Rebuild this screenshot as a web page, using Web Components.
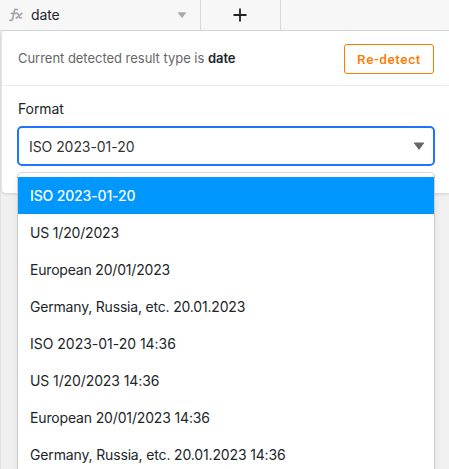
<!DOCTYPE html>
<html lang="en">
<head>
<meta charset="utf-8">
<title>Formula column format</title>
<style>
html, body { margin: 0; height: 469px; overflow: hidden; }
body { font: 14px/20px Inter, "Liberation Sans", sans-serif; color: #212529; }
</style>
</head>
<body>
<formula-view></formula-view>
<script>
function define(name, html) {
  const template = document.createElement('template');
  template.innerHTML = html;
  customElements.define(name, class extends HTMLElement {
    constructor() {
      super();
      this.attachShadow({ mode: 'open' }).append(template.content.cloneNode(true));
    }
  });
}

define('column-header', `
<style>
:host { display: flex; height: 30px; background: #f7f7f7; border-bottom: 1px solid #d5d8dc; }
.column { box-sizing: border-box; width: 201px; display: flex; align-items: center; padding: 0 13px 0 9px; border-right: 1px solid #d5d8dc; }
.name { flex: 1; margin-left: 8px; letter-spacing: -.15px; }
.add { box-sizing: border-box; width: 80px; display: grid; place-items: center; border-right: 1px solid #d5d8dc; }
.add svg { position: relative; left: -.5px; top: -.5px; }
svg { display: block; }
</style>
<div class="column">
  <svg width="14" height="14" viewBox="0 0 14 14" fill="none" stroke="#a6a6a6" stroke-width="1.7" stroke-linecap="round" stroke-linejoin="round"><path d="M8.2 1.7C6.9.8 5.8 1.3 5.4 3L3.7 10.5C3.4 12.1 2.5 12.8 1 12.2M2.5 5.3H7M7.5 5.3c1-.3 1.4.2 1.8 1.2l.9 2.2c.4 1.1.9 1.4 1.9 1M12.9 5.3 7.3 10.1"/></svg>
  <span class="name">date</span>
  <svg width="10" height="7" viewBox="0 0 10 7"><path d="M1.3.8H8.7L5 5.5Z" fill="#aaa" stroke="#aaa" stroke-linejoin="round"/></svg>
</div>
<div class="add"><svg width="14" height="14" viewBox="0 0 14 14"><path d="M0.5 7H13.5M7 .5V13.5" stroke="#212529" stroke-width="1.8"/></svg></div>
`);

define('outline-button', `
<style>
:host { display: grid; box-sizing: border-box; width: 90px; height: 30px; place-items: center; border: 1px solid #ff7a00; border-radius: 3px; color: #ff7a00; font: 500 13.5px/20px Roboto, sans-serif; letter-spacing: .6px; }
</style><span><slot></slot></span>`);

define('result-type', `
<style>
:host { display: flex; box-sizing: border-box; height: 55px; padding: 0 15px 0 16px; align-items: center; justify-content: space-between; border-bottom: 1px solid #ededed; }
p { margin: 0 0 1px; font-size: 13px; color: #666; letter-spacing: -.03px; }
outline-button { margin-top: 1px; }
b { color: #212529; font-weight: 600; }
</style><p>Current detected result type is <b>date</b></p><outline-button>Re-detect</outline-button>`);

define('select-box', `
<style>
:host { display: flex; box-sizing: border-box; width: 418px; height: 40px; padding: 1px 8px 0 10px; align-items: center; justify-content: space-between; background: #fff; border: 2px solid #1f74ff; border-radius: 5px; color: #333; }
span { letter-spacing: -.06px; padding-top: 1px; }
svg { display: block; margin-bottom: 1px; }
</style><span><slot></slot></span><svg width="12" height="9" viewBox="0 0 12 9"><path d="M1.3 1H10.7L6 7.3Z" fill="#666" stroke="#666" stroke-linejoin="round"/></svg>`);

define('format-option', `
<style>
:host { display: flex; height: 37px; align-items: center; padding-left: 12px; letter-spacing: var(--tracking, -.15px); }
:host([selected]) { background: #0098ff; color: #fff; font-weight: 500; }
</style><span><slot></slot></span>`);

define('option-list', `
<style>
:host { display: block; box-sizing: border-box; width: 418px; height: 340px; padding-top: 4px; background: #fff; border: 1px solid #ccc; border-top-color: #d9d9d9; border-radius: 5px; box-shadow: 0 3px 7px rgba(0,0,0,.07); }
</style><slot></slot>`);

define('formula-view', `
<style>
:host { position: relative; display: block; height: 469px; background: #f0f0f0; overflow: hidden; box-shadow: inset 1px 0 #e0e3e6; }
.panel { box-sizing: border-box; height: 162px; margin-left: 2px; background: #fff; border-radius: 4px 0 0 4px; box-shadow: 0 1px 3px rgba(0,0,0,.15); }
.field { padding: 13px 0 0 15px; }
label { display: block; margin: 0 0 7px 1px; letter-spacing: -.1px; }
option-list { position: absolute; left: 17px; top: 172px; }
.slash { --tracking: -.18px; }
.long { --tracking: -.19px; }
.iso-time { --tracking: -.02px; }
</style>
<column-header></column-header>
<div class="panel">
  <result-type></result-type>
  <div class="field"><label>Format</label><select-box>ISO 2023-01-20</select-box></div>
</div>
<option-list>
  <format-option selected>ISO 2023-01-20</format-option>
  <format-option class="slash">US 1/20/2023</format-option>
  <format-option class="long">European 20/01/2023</format-option>
  <format-option class="long">Germany, Russia, etc. 20.01.2023</format-option>
  <format-option class="iso-time">ISO 2023-01-20 14:36</format-option>
  <format-option style="--tracking: -.1px">US 1/20/2023 14:36</format-option>
  <format-option>European 20/01/2023 14:36</format-option>
  <format-option>Germany, Russia, etc. 20.01.2023 14:36</format-option>
</option-list>`);
</script>
</body>
</html>
